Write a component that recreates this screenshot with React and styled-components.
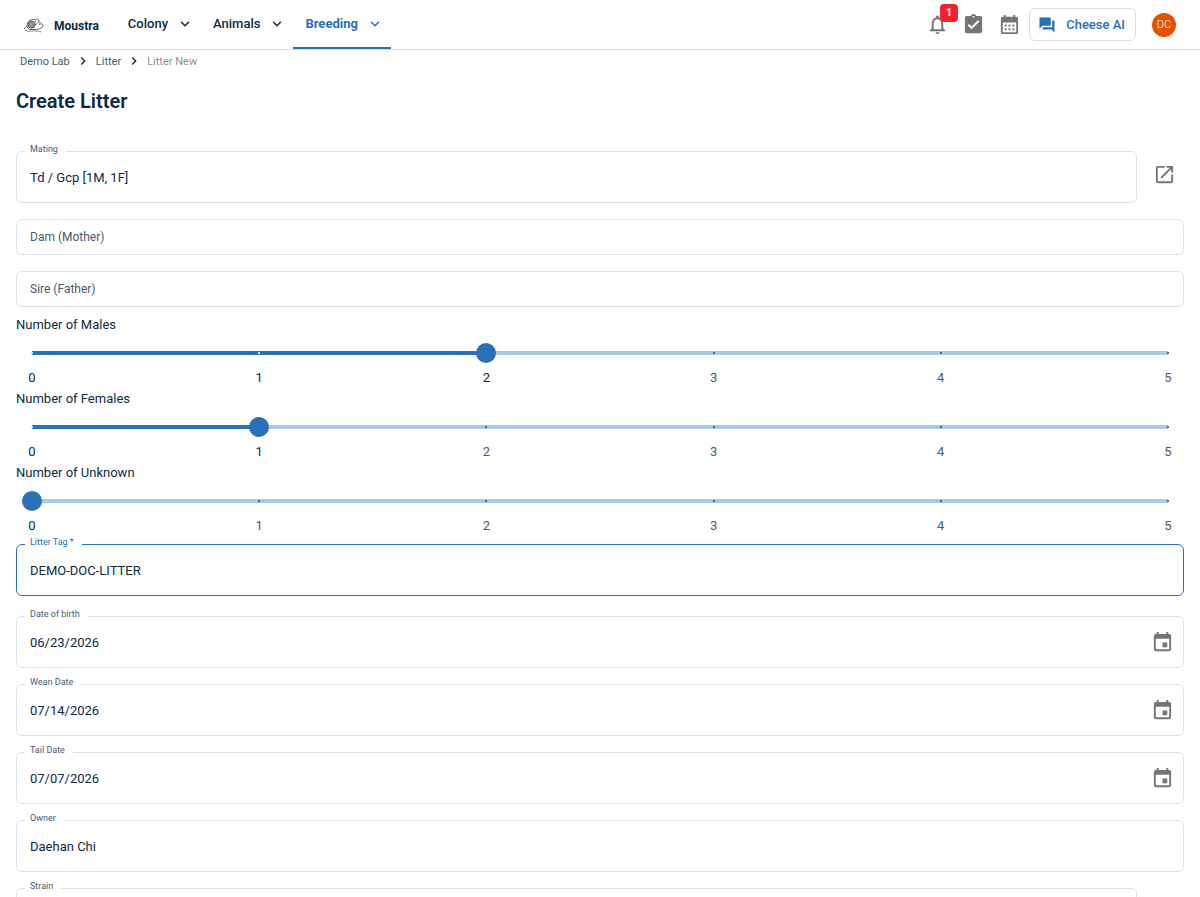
import React, { useState } from "react";
import styled, { createGlobalStyle } from "styled-components";
import { ChevronDown } from "lucide-react";
import {
  MdAssignmentTurnedIn,
  MdCalendarMonth,
  MdEvent,
  MdForum,
  MdNavigateNext,
  MdOpenInNew,
  MdOutlineNotifications,
} from "react-icons/md";

const ink = "#0b2a45";
const muted = "#465b6e";
const primary = "#2970b8";
const line = "#dbe1e7";
const iconGray = "#757575";

const GlobalStyle = createGlobalStyle`
  * {
    box-sizing: border-box;
  }
  html {
    scrollbar-width: none;
  }
  body {
    margin: 0;
    background: #fff;
    color: ${ink};
    font-family: Roboto, "Noto Sans", sans-serif;
    font-size: 13px;
  }
  button,
  input {
    font: inherit;
    color: inherit;
  }
`;

const Header = styled.header`
  display: flex;
  height: 50px;
  padding: 0 24px;
  border-bottom: 1px solid #d9dcdf;
`;
const Brand = styled.a`
  display: flex;
  align-items: center;
  gap: 10px;
  margin-right: 17px;
  padding-top: 2px;
  color: ${ink};
  font-size: 12px;
  font-weight: 700;
  text-decoration: none;
`;
const Tabs = styled.nav`
  display: flex;
`;
const Tab = styled.button`
  display: flex;
  align-items: center;
  gap: 10px;
  height: 49px;
  padding: 0 9px 0 12px;
  border: 0;
  border-bottom: 2px solid ${(props) => (props.$active ? primary : "transparent")};
  background: none;
  color: ${(props) => (props.$active ? primary : ink)};
  font-weight: ${(props) => (props.$active ? 700 : 500)};
`;
const Actions = styled.div`
  display: flex;
  align-items: center;
  margin-left: auto;
`;
const IconButton = styled.button`
  position: relative;
  display: flex;
  align-items: center;
  justify-content: center;
  flex-shrink: 0;
  width: ${(props) => props.$width || 36}px;
  height: ${(props) => props.$height || 36}px;
  padding: 0;
  border: 0;
  background: none;
  color: ${iconGray};
  font-size: 23px;
`;
const Badge = styled.span`
  position: absolute;
  top: -3px;
  right: -3px;
  width: 18px;
  height: 18px;
  border-radius: 4px;
  background: #f5222d;
  color: #fff;
  font-size: 10px;
  font-weight: 700;
  line-height: 18px;
  text-align: center;
`;
const CheeseButton = styled.button`
  display: flex;
  align-items: center;
  gap: 10px;
  height: 33px;
  margin: 0 16px 0 2px;
  padding: 0 10px 0 8px;
  border: 1px solid #d8dde3;
  border-radius: 6px;
  background: #fff;
  color: ${primary};
  font-weight: 500;
`;
const Avatar = styled.button`
  width: 24px;
  height: 24px;
  padding: 0;
  border: 0;
  border-radius: 50%;
  background: #e65100;
  color: #fff;
  font-size: 11px;
  font-weight: 300;
`;

const Crumbs = styled.nav`
  display: flex;
  align-items: center;
  gap: 5px;
  height: 22px;
  padding: 0 20px;
  color: ${muted};
  font-size: 11px;
`;
const Crumb = styled.a`
  color: ${muted};
  text-decoration: none;
`;
const Current = styled.span`
  color: #8f8f8f;
`;

const Main = styled.main`
  padding: 14px 16px 24px;
`;
const Title = styled.h1`
  margin: 0 0 35px;
  font-size: 20px;
  font-weight: 600;
  line-height: 30px;
`;
const Stack = styled.div`
  display: flex;
  flex-direction: column;
  gap: 16px;
`;
const TagRow = styled.div`
  margin-bottom: 20px;
`;
const FieldRow = styled.div`
  display: flex;
  gap: 8px;
`;
const FieldBox = styled.div`
  position: relative;
  display: flex;
  align-items: center;
  flex: 1 0 auto;
  height: 52px;
  padding-right: 9px;
  border: 1px solid ${(props) => (props.$active ? primary : line)};
  border-radius: 6px;
`;
const FieldLabel = styled.label`
  position: absolute;
  top: -9px;
  left: 8px;
  padding: 0 8px 0 5px;
  background: #fff;
  color: ${(props) => (props.$active ? primary : muted)};
  font-size: 9px;
  line-height: 12px;
`;
const FieldInput = styled.input`
  flex: 1;
  min-width: 0;
  height: 100%;
  padding: 0 13px;
  border: 0;
  outline: 0;
  background: none;
`;
const EmptyBox = styled.div`
  display: flex;
  align-items: center;
  height: 36px;
  padding-left: 13px;
  border: 1px solid ${line};
  border-radius: 6px;
`;
const EmptyLabel = styled.label`
  color: ${muted};
  font-size: 12px;
`;

const Sliders = styled.div`
  display: flex;
  flex-direction: column;
  gap: 2px;
  padding: 8px 0 9px;
`;
const SliderBlock = styled.div`
  display: flex;
  flex-direction: column;
`;
const SliderLabel = styled.label`
  line-height: 20px;
`;
const Rail = styled.div`
  position: relative;
  height: 20px;
  margin: 8px 6px 6px;
`;
const Range = styled.input`
  display: block;
  width: 100%;
  height: 20px;
  margin: 0;
  appearance: none;
  background: linear-gradient(
      to right,
      ${primary} var(--filled),
      #acc8e4 var(--filled)
    )
    center / calc(100% - 20px) 4px no-repeat;

  &::-webkit-slider-thumb {
    appearance: none;
    width: 20px;
    height: 20px;
    border-radius: 50%;
    background: ${primary};
  }
`;
const Ticks = styled.div`
  position: absolute;
  inset: 9px 9px auto;
  display: flex;
  justify-content: space-between;
  pointer-events: none;
`;
const Tick = styled.span`
  width: 2px;
  height: 2px;
  background: ${(props) => (props.$on ? "#d4e2f1" : primary)};
  visibility: ${(props) => (props.$hidden ? "hidden" : "visible")};
`;
const Marks = styled.div`
  display: flex;
  justify-content: space-between;
  margin: 0 6px;
  line-height: 18px;
`;
const Mark = styled.span`
  width: 20px;
  color: ${(props) => (props.$on ? ink : muted)};
  text-align: center;
`;

function MouseLogo() {
  return (
    <svg width="20" height="16" viewBox="0 0 20 16" fill="none" stroke="#555" strokeLinecap="round">
      <path d="M10.600 1.400C6.500.6 3.200 3.300 3 7.500c0 2.200 1.200 3.600 3.200 4h6.300c3.200-.2 5.700-1.400 6.700-3.700-.3-1.200-2-2.800-4.400-4.100" strokeWidth=".9" />
      <circle cx="7.600" cy="6.600" r="3.600" fill="#aaa" strokeWidth="1" />
      <path d="M7.800 4.200c-1.800.3-2.600 2.800-1.200 4.200M8.500 5.500c1.500 1 .8 3.500-.9 3.700" strokeWidth=".8" />
      <path d="M11.300 3.600c-.2-1.700.7-2.800 2-2.700 1.500.1 2.100 1.700 1.200 3-1 .8-2 1.400-2.300 2.600" strokeWidth=".8" />
      <path d="M2.800 8C.3 9.200-.2 11 1.600 12.400c3 2.100 8.300-.5 12 .7 1.200.4 2 .9 3.300.8" strokeWidth=".7" />
      <circle cx="15.800" cy="6.200" r=".6" fill="#333" stroke="none" />
    </svg>
  );
}

function Field({ id, label, value, active, date }) {
  const [text, setText] = useState(value);
  return (
    <FieldBox $active={active}>
      <FieldLabel htmlFor={id} $active={active}>
        {label}
      </FieldLabel>
      <FieldInput id={id} value={text} onChange={(e) => setText(e.target.value)} />
      {date && (
        <IconButton $width={23} aria-label={`Choose ${label}`}>
          <MdEvent />
        </IconButton>
      )}
    </FieldBox>
  );
}

function EmptyField({ id, label }) {
  return (
    <EmptyBox>
      <EmptyLabel htmlFor={id}>{label}</EmptyLabel>
      <FieldInput id={id} />
    </EmptyBox>
  );
}

const steps = [0, 1, 2, 3, 4, 5];

function CountSlider({ id, label, initial }) {
  const [count, setCount] = useState(initial);
  return (
    <SliderBlock>
      <SliderLabel htmlFor={id}>{label}</SliderLabel>
      <Rail>
        <Range
          id={id}
          type="range"
          min="0"
          max="5"
          value={count}
          onChange={(e) => setCount(Number(e.target.value))}
          style={{ "--filled": `${count * 20}%` }}
        />
        <Ticks>
          {steps.map((n) => (
            <Tick key={n} $on={n < count} $hidden={n === count} />
          ))}
        </Ticks>
      </Rail>
      <Marks>
        {steps.map((n) => (
          <Mark key={n} $on={n <= count}>
            {n}
          </Mark>
        ))}
      </Marks>
    </SliderBlock>
  );
}

function App() {
  return (
    <>
      <GlobalStyle />
      <Header>
        <Brand href="#">
          <MouseLogo />
          Moustra
        </Brand>
        <Tabs>
          {["Colony", "Animals", "Breeding"].map((name) => (
            <Tab key={name} $active={name === "Breeding"}>
              {name}
              <ChevronDown size={14} strokeWidth={2.5} />
            </Tab>
          ))}
        </Tabs>
        <Actions>
          <IconButton aria-label="Notifications">
            <MdOutlineNotifications />
            <Badge>1</Badge>
          </IconButton>
          <IconButton aria-label="Tasks">
            <MdAssignmentTurnedIn />
          </IconButton>
          <IconButton aria-label="Calendar">
            <MdCalendarMonth />
          </IconButton>
          <CheeseButton>
            <MdForum size={18} />
            Cheese AI
          </CheeseButton>
          <Avatar>DC</Avatar>
        </Actions>
      </Header>
      <Crumbs aria-label="Breadcrumb">
        <Crumb href="#">Demo Lab</Crumb>
        <MdNavigateNext size={16} color={ink} />
        <Crumb href="#">Litter</Crumb>
        <MdNavigateNext size={16} color={ink} />
        <Current>Litter New</Current>
      </Crumbs>
      <Main>
        <Title>Create Litter</Title>
        <Stack>
          <FieldRow>
            <Field id="mating" label="Mating" value="Td / Gcp [1M, 1F]" />
            <IconButton $width={39} $height={46} aria-label="Open mating">
              <MdOpenInNew />
            </IconButton>
          </FieldRow>
          <EmptyField id="dam" label="Dam (Mother)" />
          <EmptyField id="sire" label="Sire (Father)" />
        </Stack>
        <Sliders>
          <CountSlider id="males" label="Number of Males" initial={2} />
          <CountSlider id="females" label="Number of Females" initial={1} />
          <CountSlider id="unknown" label="Number of Unknown" initial={0} />
        </Sliders>
        <TagRow>
          <Field id="tag" label="Litter Tag *" value="DEMO-DOC-LITTER" active />
        </TagRow>
        <Stack>
          <Field id="birth" label="Date of birth" value="06/23/2026" date />
          <Field id="wean" label="Wean Date" value="07/14/2026" date />
          <Field id="tail" label="Tail Date" value="07/07/2026" date />
          <Field id="owner" label="Owner" value="Daehan Chi" />
          <FieldRow>
            <Field id="strain" label="Strain" value="" />
            <IconButton $width={39} $height={46} aria-label="Open strain">
              <MdOpenInNew />
            </IconButton>
          </FieldRow>
        </Stack>
      </Main>
    </>
  );
}

export default App;
